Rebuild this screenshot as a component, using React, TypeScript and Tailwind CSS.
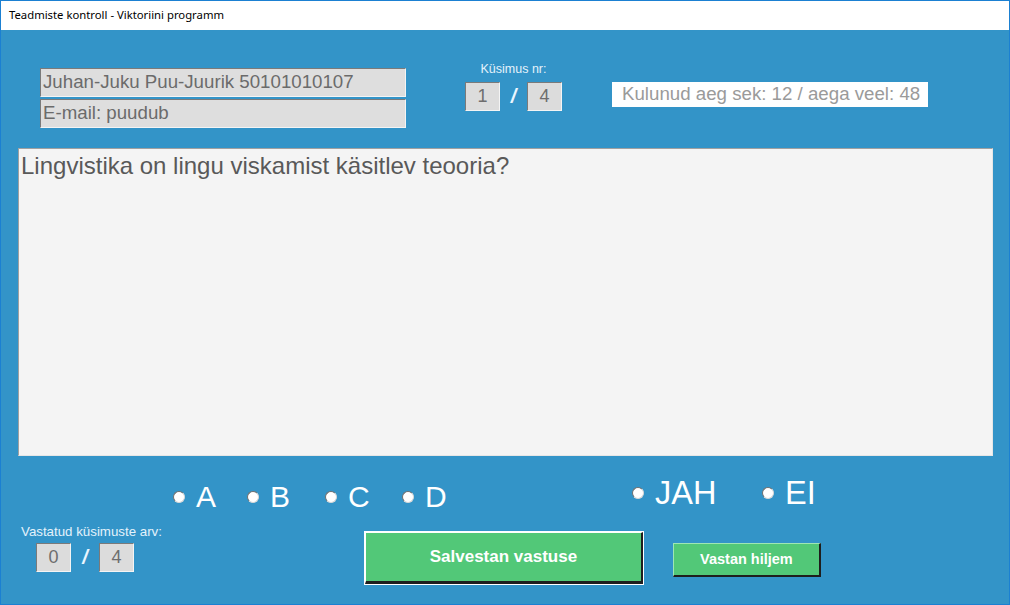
import React, { useState } from 'react';

const arial = { fontFamily: '"Liberation Sans", Arial, sans-serif' };

const sunken =
  'border border-t-[#7a7a7a] border-l-[#7a7a7a] border-r-[#f4f4f4] border-b-[#f4f4f4]';

function NumBox({ value }: { value: string }) {
  return (
    <div
      className={`w-[35px] h-[29px] bg-[#dcdcdc] ${sunken} flex items-center justify-center text-[18px] text-[#6e6e6e]`}
    >
      {value}
    </div>
  );
}

function Radio({
  label,
  checked,
  onClick,
  width,
  size,
}: {
  label: string;
  checked: boolean;
  onClick: () => void;
  width: string;
  size: string;
}) {
  return (
    <button onClick={onClick} className={`flex items-center gap-[11px] ${width} text-white leading-none`}>
      <span className="shrink-0 w-[12px] h-[12px] rounded-full bg-white border border-t-[#6f6f6f] border-l-[#6f6f6f] border-r-[#d8d8d8] border-b-[#d8d8d8] flex items-center justify-center">
        {checked && <span className="w-[5px] h-[5px] rounded-full bg-[#333]" />}
      </span>
      <span className={size}>{label}</span>
    </button>
  );
}

export default function App() {
  const [choice, setChoice] = useState<string | null>(null);
  const [yesNo, setYesNo] = useState<string | null>(null);

  return (
    <div className="w-[1010px] h-[605px] border border-[#1b80d2] flex flex-col overflow-hidden" style={arial}>
      <div
        className="h-[29px] bg-white flex items-center pl-[8px] text-[11.3px] text-black"
        style={{ fontFamily: '"Noto Sans", "Open Sans", sans-serif' }}
      >
        Teadmiste kontroll - Viktoriini programm
      </div>

      <div className="flex-1 bg-[#3394c8] flex flex-col">
        {/* top row */}
        <div className="flex items-start pt-[32px]">
          <div className="ml-[39px] mt-[6px] flex flex-col gap-[2px]">
            <div className={`w-[366px] h-[29px] bg-[#dedede] ${sunken} flex items-center px-[2px] text-[18.7px] text-[#6b6b6b]`}>
              Juhan-Juku Puu-Juurik 50101010107
            </div>
            <div className={`w-[366px] h-[29px] bg-[#dedede] ${sunken} flex items-center px-[2px] text-[18.7px] text-[#6b6b6b]`}>
              E-mail: puudub
            </div>
          </div>

          <div className="ml-[59px] w-[97px] flex flex-col items-center">
            <div className="text-[12.5px] text-[#e4f2fb] leading-[14px]">Küsimus nr:</div>
            <div className="mt-[5px] w-full flex items-center justify-between">
              <NumBox value="1" />
              <span className="text-[20px] font-bold text-[#eaf6ff] italic">/</span>
              <NumBox value="4" />
            </div>
          </div>

          <div className="ml-[50px] mt-[20px] w-[316px] h-[25px] bg-white flex items-center pl-[10px] text-[18.7px] text-[#9a9a9a]">
            Kulunud aeg sek: 12 / aega veel: 48
          </div>
        </div>

        {/* question */}
        <div className="ml-[17px] mt-[20px] w-[975px] h-[308px] bg-[#f4f4f4] border border-t-[#a0a0a0] border-l-[#a0a0a0] border-r-[#e6e6e6] border-b-[#e6e6e6] px-[2px] pt-[2px] text-[24px] leading-[30px] text-[#595959]">
          Lingvistika on lingu viskamist käsitlev teooria?
        </div>

        {/* answers */}
        <div className="flex items-start mt-[22px]">
          <div className="ml-[172px] mt-[4px] flex items-center">
            {['A', 'B', 'C', 'D'].map((l) => (
              <Radio
                key={l}
                label={l}
                checked={choice === l}
                onClick={() => setChoice(l)}
                width={l === 'A' ? 'w-[74px]' : l === 'B' ? 'w-[78px]' : 'w-[77px]'}
                size="text-[30px]"
              />
            ))}
          </div>
          <div className="ml-[153px] -mt-[1px] flex items-center">
            {['JAH', 'EI'].map((l) => (
              <Radio
                key={l}
                label={l}
                checked={yesNo === l}
                onClick={() => setYesNo(l)}
                width="w-[130px]"
                size="text-[32.5px]"
              />
            ))}
          </div>
        </div>

        {/* bottom */}
        <div className="flex items-start mt-[12px]">
          <div className="ml-[20px] flex flex-col">
            <div className="text-[13.3px] text-[#e4f2fb] leading-[15px]">Vastatud küsimuste arv:</div>
            <div className="mt-[3px] ml-[15px] w-[98px] flex items-center justify-between">
              <NumBox value="0" />
              <span className="text-[20px] font-bold text-[#eaf6ff] italic">/</span>
              <NumBox value="4" />
            </div>
          </div>

          <button className="ml-[203px] mt-[8px] w-[278px] h-[52px] bg-[#52c878] border border-t-white border-l-white border-r-[#1e1e1e] border-b-[#1e1e1e] border-b-[3px] border-r-[2px] text-white font-bold text-[17px] outline outline-1 outline-white">
            Salvestan vastuse
          </button>

          <button className="ml-[30px] mt-[19px] w-[148px] h-[34px] bg-[#52c878] border border-t-[#9ee6b4] border-l-[#9ee6b4] border-r-[#1e1e1e] border-b-[#1e1e1e] border-b-[2px] border-r-[2px] text-white font-bold text-[14.5px]">
            Vastan hiljem
          </button>
        </div>
      </div>
    </div>
  );
}
